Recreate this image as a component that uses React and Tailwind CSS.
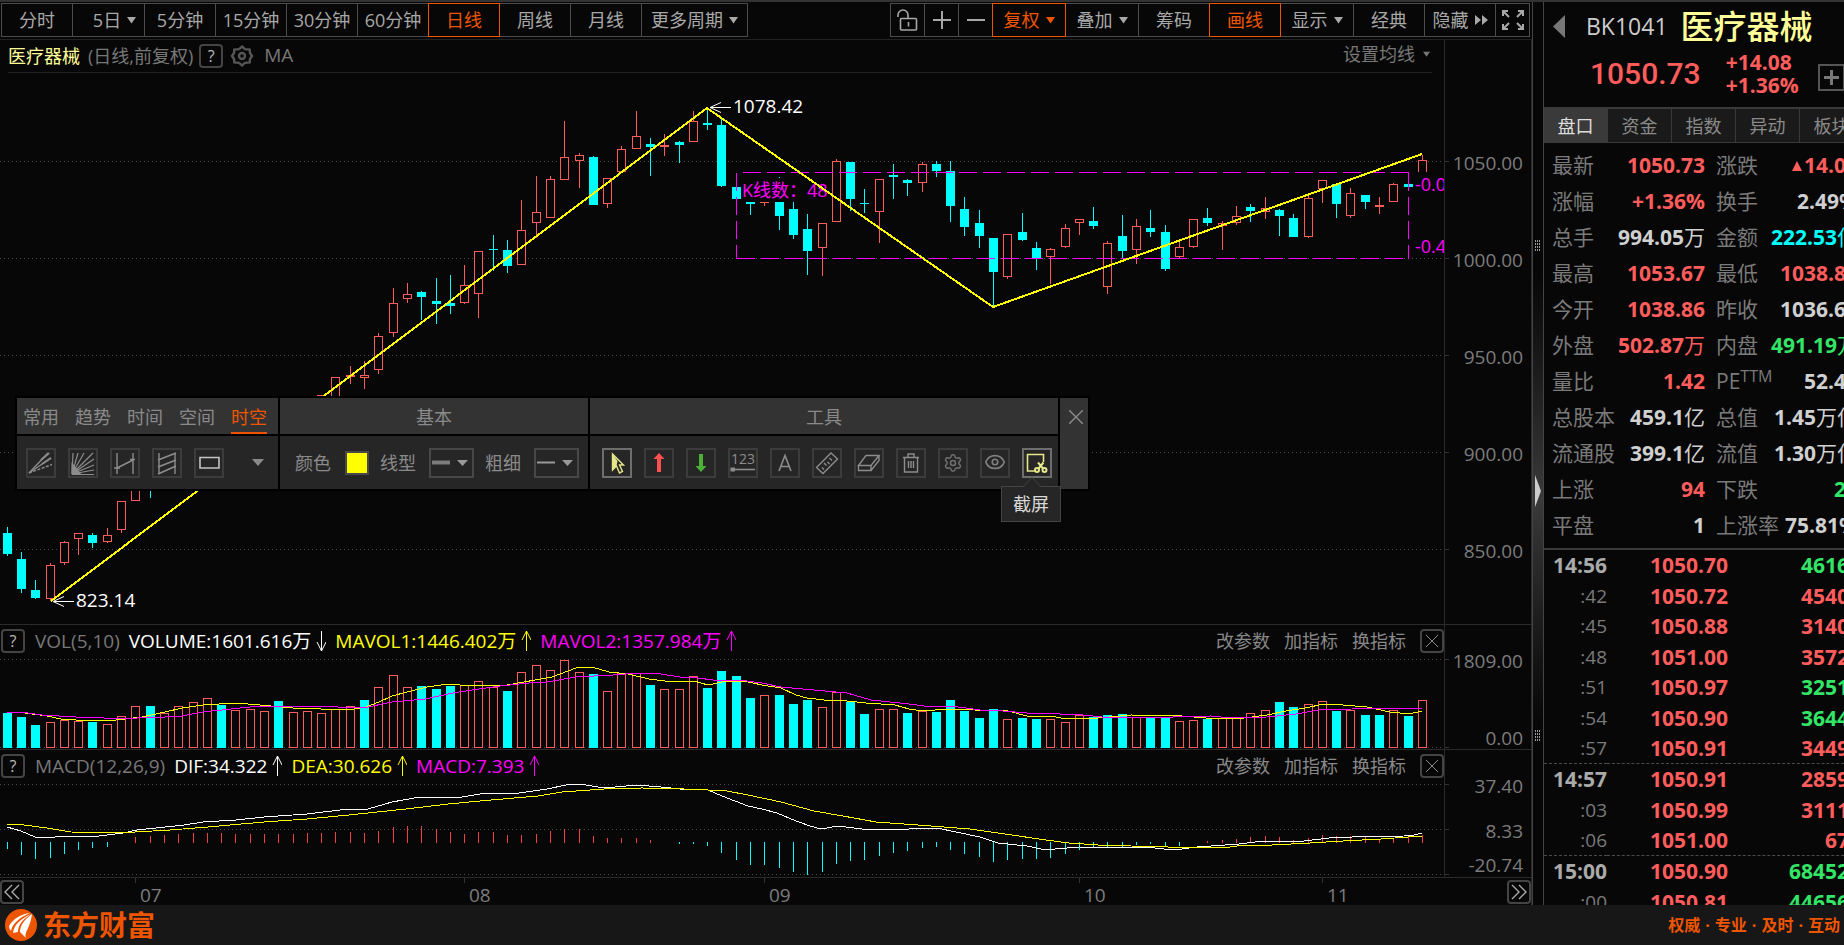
import React, { useState } from 'react'
import clsx from 'clsx'
import { Eye, Settings } from 'lucide-react'

const RED = '#ff5c5c'
const CYAN = '#00ffff'
const YELLOW = '#ffff00'
const MAGENTA = '#ff00ff'

// x of the centre pixel of bar i
const barX = (i) => Math.floor(7.2 + 14.295 * i)

// Daily bars: [up, high, bodyTop, bodyBottom, low]
const CANDLES = [
  [0, 527, 533, 554, 556], [0, 552, 559, 589, 593], [0, 580, 590, 598, 599], [1, 563, 565, 599, 601], [1, 541, 542, 563, 565],
  [1, 533, 533, 539, 555], [0, 533, 535, 543, 548], [1, 528, 535, 542, 543], [1, 501, 501, 530, 533], [1, 478, 484, 501, 501],
  [0, 470, 476, 486, 498], [1, 450, 455, 480, 484], [1, 440, 446, 470, 474], [1, 430, 440, 462, 470], [1, 428, 433, 452, 458],
  [0, 430, 436, 450, 455], [1, 422, 430, 448, 452], [1, 415, 424, 440, 446], [1, 410, 418, 436, 440], [0, 412, 420, 432, 438],
  [1, 404, 410, 430, 434], [1, 400, 404, 420, 426], [1, 395, 395, 415, 420], [1, 377, 377, 410, 414], [1, 366, 375, 377, 384],
  [1, 361, 375, 378, 389], [1, 333, 336, 370, 374], [1, 288, 303, 333, 337], [1, 283, 294, 299, 303], [0, 291, 292, 297, 320],
  [0, 278, 301, 304, 324], [0, 275, 303, 306, 314], [1, 265, 285, 303, 304], [1, 251, 251, 294, 318], [0, 235, 249, 250, 271],
  [0, 240, 250, 266, 273], [1, 200, 230, 265, 265], [1, 176, 212, 223, 238], [1, 176, 179, 218, 218], [1, 121, 157, 180, 180],
  [1, 153, 155, 161, 188], [0, 156, 157, 205, 205], [1, 178, 178, 204, 208], [1, 146, 149, 172, 172], [1, 111, 136, 149, 149],
  [0, 138, 144, 147, 176], [1, 134, 145, 147, 156], [0, 141, 142, 145, 163], [1, 111, 121, 142, 142], [0, 108, 123, 125, 130],
  [0, 119, 125, 186, 187], [0, 187, 187, 199, 199], [0, 194, 200, 204, 215], [1, 190, 195, 203, 206], [0, 177, 190, 216, 230],
  [0, 202, 209, 235, 239], [0, 214, 229, 251, 275], [1, 223, 223, 248, 276], [1, 159, 161, 222, 222], [0, 162, 162, 199, 211],
  [0, 189, 203, 204, 213], [1, 179, 179, 212, 243], [0, 164, 175, 177, 199], [0, 179, 180, 183, 196], [1, 162, 164, 183, 192],
  [0, 161, 164, 171, 177], [0, 161, 171, 206, 222], [0, 197, 209, 227, 236], [0, 210, 223, 236, 248], [0, 238, 238, 272, 307],
  [1, 234, 234, 277, 279], [0, 213, 232, 240, 241], [0, 242, 248, 258, 270], [1, 248, 249, 257, 284], [1, 224, 228, 247, 248],
  [1, 219, 219, 223, 235], [0, 207, 221, 226, 229], [1, 241, 243, 287, 294], [0, 215, 236, 251, 258], [1, 219, 226, 250, 264],
  [0, 210, 228, 232, 237], [0, 225, 232, 269, 271], [1, 242, 247, 257, 258], [1, 219, 219, 247, 248], [0, 208, 218, 223, 226],
  [1, 221, 223, 226, 250], [1, 206, 216, 223, 225], [0, 204, 207, 211, 222], [1, 197, 208, 212, 219], [0, 209, 210, 216, 236],
  [0, 214, 218, 237, 237], [1, 196, 198, 237, 238], [1, 180, 180, 189, 203], [0, 184, 184, 204, 218], [1, 188, 193, 216, 218],
  [0, 195, 195, 202, 209], [1, 197, 205, 207, 214], [1, 183, 184, 202, 202], [0, 184, 184, 187, 187], [1, 155, 160, 172, 172],
]

// Volume bar heights, negative on falling days
const VOLUMES = [
  -35, -31, -23, 26, 28, 27, -26, 24, 32, 42, -42, 35, 42, 46, 50, -43, 38, 39, 37, -47,
  36, 37, 35, 39, 42, -48, 61, 73, 61, -62, -59, -62, 63, 67, 61, -57, 76, 83, 78, 88,
  76, -74, 57, 75, 75, -63, 59, 59, 72, -60, -77, -72, -50, 53, -53, -44, -48, 41, 56, -46,
  -34, 39, 39, -35, 37, -36, -48, -37, -30, -39, 29, -30, -29, 29, 26, 33, -31, -33, -34, 31,
  -31, -31, 27, 28, -29, 30, 30, 35, 38, -46, -41, 44, 47, -37, 38, -33, -33, 38, -32, 48,
]

// MACD histogram, positive above the zero line
const HISTOGRAM = [
  -7, -13, -17, -16, -12, -8, -6, -5, 0, 6, 7, 8, 9, 10, 10, 10, 9, 9, 9, 9,
  9, 10, 10, 11, 11, 10, 12, 16, 17, 17, 14, 11, 9, 11, 11, 8, 8, 9, 12, 14,
  14, 7, 5, 5, 5, 3, 0, -2, -2, -4, -11, -18, -23, -23, -26, -30, -33, -30, -22, -19,
  -18, -14, -11, -9, -6, -5, -8, -12, -15, -20, -18, -17, -17, -16, -12, -8, -5, -6, -5, -3,
  -2, -5, -4, 0, 2, 3, 4, 6, 7, 6, 3, 5, 8, 7, 7, 6, 4, 5, 6, 8,
]

const MAVOL1 = '25,713 47,716 61,719 76,720 99,721 116,720 142,717 165,712 182,708 203,705 236,703 260,705 293,708 321,709 354,709 366,707 379,702 392,696 411,691 427,687 448,684 472,686 496,685 507,685 524,682 552,677 576,668 592,667 609,672 628,674 649,679 665,681 694,681 708,685 722,682 734,681 744,681 762,685 781,688 796,695 807,698 824,700 847,701 866,703 895,705 909,709 923,711 947,709 975,710 1008,711 1027,716 1050,716 1067,719 1098,718 1131,715 1182,716 1206,718 1244,718 1267,715 1286,711 1305,708 1324,704 1343,705 1367,707 1390,712 1409,714 1422,711'
const MAVOL2 = '7,712 28,713 42,715 76,717 104,718 137,718 165,717 182,716 203,712 231,709 250,707 293,706 326,706 349,708 368,707 392,702 425,699 453,693 472,690 500,686 529,683 547,682 576,677 613,675 637,673 661,674 680,677 698,678 713,680 739,680 762,683 781,687 814,690 847,693 871,700 909,704 932,707 951,706 980,710 1003,711 1027,713 1060,714 1083,715 1102,717 1131,717 1173,717 1211,716 1230,718 1267,717 1296,714 1319,710 1352,709 1376,708 1409,709 1422,708'
const DIF = '7,827 21,831 35,837 50,838 61,836 99,836 123,833 137,830 184,825 203,822 236,820 264,817 307,814 340,810 368,809 392,802 420,797 462,797 486,793 519,793 547,789 566,785 580,784 604,788 637,785 661,787 680,789 708,790 722,796 748,806 762,809 777,813 796,821 810,826 821,829 838,826 862,829 890,829 909,829 937,828 956,832 980,837 998,843 1027,846 1041,849 1055,849 1079,847 1121,848 1145,847 1164,849 1182,849 1197,847 1239,844 1263,841 1296,842 1329,838 1352,837 1404,836 1414,835 1422,833'
const DEA = '7,824 24,825 47,828 71,832 118,833 170,830 208,827 264,822 307,819 349,815 406,809 448,804 491,800 538,796 562,792 604,789 642,788 684,789 708,790 727,791 748,795 781,802 814,811 843,816 876,822 918,825 970,829 998,833 1046,840 1069,843 1098,845 1131,846 1168,847 1230,847 1244,845 1272,845 1310,843 1343,841 1381,839 1422,836'

const PRICE_LEVELS = [['1050.00', 161], ['1000.00', 258], ['950.00', 355], ['900.00', 452], ['850.00', 549]]
const MONTHS = [['07', 135], ['08', 464], ['09', 764], ['10', 1079], ['11', 1322]]

const QUOTES = [
  ['最新', '1050.73', '', 'r', '涨跌', '▲14.08', '', 'r'],
  ['涨幅', '+1.36%', '', 'r', '换手', '2.49%', '', 'w'],
  ['总手', '994.05', '万', 'w', '金额', '222.53', '亿', 'c'],
  ['最高', '1053.67', '', 'r', '最低', '1038.86', '', 'r'],
  ['今开', '1038.86', '', 'r', '昨收', '1036.65', '', 'w'],
  ['外盘', '502.87', '万', 'r', '内盘', '491.19', '万', 'g'],
  ['量比', '1.42', '', 'r', 'PE', '52.45', '', 'w'],
  ['总股本', '459.1', '亿', 'w', '总值', '1.45', '万亿', 'w'],
  ['流通股', '399.1', '亿', 'w', '流值', '1.30', '万亿', 'w'],
  ['上涨', '94', '', 'r', '下跌', '29', '', 'g'],
  ['平盘', '1', '', 'w', '上涨率', '75.81%', '', 'w'],
]

const TICKS = [
  ['14:56', '1050.70', '4616', 'g'],
  [':42', '1050.72', '4540', 'r'],
  [':45', '1050.88', '3140', 'r'],
  [':48', '1051.00', '3572', 'r'],
  [':51', '1050.97', '3251', 'g'],
  [':54', '1050.90', '3644', 'g'],
  [':57', '1050.91', '3449', 'r'],
  ['14:57', '1050.91', '2859', 'r'],
  [':03', '1050.99', '3111', 'r'],
  [':06', '1051.00', '67', 'r'],
  ['15:00', '1050.90', '68452', 'g'],
  [':00', '1050.81', '44656', 'g'],
]

const TONE = {
  r: 'text-[#ff5c5c]',
  g: 'text-[#33e566]',
  c: 'text-[#00ffff]',
  w: 'text-[#d0d0d0]',
}

function Caret({ className }) {
  return (
    <svg className={clsx('shrink-0', className)} width="9" height="7" viewBox="0 0 9 7" fill="currentColor">
      <path d="M0 0h9L4.5 6.5z" />
    </svg>
  )
}

function BarButton({ label, width, active, caret, children }) {
  return (
    <button
      aria-label={label}
      className={clsx(
        'relative -ml-px flex h-[34px] items-center justify-center gap-1.5 border whitespace-nowrap',
        width,
        active ? 'z-10 border-[#ee5500] text-[#ee5500]' : 'border-[#4c4c4c] text-[#a8a8a8]'
      )}
    >
      {children}
      {caret && <Caret />}
    </button>
  )
}

function Toolbar() {
  return (
    <div className="flex h-[38px] shrink-0 items-start justify-between border-b border-[#222] pt-px pr-0.5 pl-0.5 text-lg">
      <div className="flex">
        <BarButton width="w-[72px]">分时</BarButton>
        <BarButton width="w-[73px]" caret><span className="pl-3">5日</span></BarButton>
        <BarButton width="w-[72px]">5分钟</BarButton>
        <BarButton width="w-[72px]">15分钟</BarButton>
        <BarButton width="w-[72px]">30分钟</BarButton>
        <BarButton width="w-[72px]">60分钟</BarButton>
        <BarButton width="w-[72px]" active>日线</BarButton>
        <BarButton width="w-[72px]">周线</BarButton>
        <BarButton width="w-[72px]">月线</BarButton>
        <BarButton width="w-[107px]" caret>更多周期</BarButton>
      </div>
      <div className="flex">
        <BarButton width="w-[35px]" label="解锁">
          <svg width="24" height="24" viewBox="0 0 24 24" fill="none" stroke="currentColor" strokeWidth="1.6">
            <path d="M2 9V7a5 5 0 0 1 5-5 5 5 0 0 1 5 5v4" />
            <rect x="4.500" y="10.5" width="16" height="11.500" rx="1" />
            <path d="M12.500 14v4.500" />
          </svg>
        </BarButton>
        <BarButton width="w-[35px]" label="放大">
          <svg width="18" height="18" viewBox="0 0 18 18" stroke="currentColor" strokeWidth="2"><path d="M0 9h18M9 0v18" /></svg>
        </BarButton>
        <BarButton width="w-[35px]" label="缩小">
          <svg width="18" height="18" viewBox="0 0 18 18" stroke="currentColor" strokeWidth="2"><path d="M0 9h18" /></svg>
        </BarButton>
        <BarButton width="w-[74px]" active caret>复权</BarButton>
        <BarButton width="w-[74px]" caret>叠加</BarButton>
        <BarButton width="w-[72px]">筹码</BarButton>
        <BarButton width="w-[72px]" active>画线</BarButton>
        <BarButton width="w-[74px]" caret>显示</BarButton>
        <BarButton width="w-[72px]">经典</BarButton>
        <BarButton width="w-[72px]">
          隐藏
          <svg width="13" height="10" viewBox="0 0 13 10" fill="currentColor"><path d="M0 0l6 5-6 5zM7 0l6 5-6 5z" /></svg>
        </BarButton>
        <BarButton width="w-[35px]" label="全屏">
          <svg width="22" height="20" viewBox="0 0 22 20" fill="none" stroke="currentColor" strokeWidth="2">
            <path d="M1 6V1h5M1 1l6 6M16 1h5v5M21 1l-6 6M1 14v5h5M1 19l6-6M21 14v5h-5M21 19l-6-6" />
          </svg>
        </BarButton>
      </div>
    </div>
  )
}

function HelpButton() {
  return (
    <button aria-label="说明" className="flex size-6 items-center justify-center rounded-sm border-2 border-[#444] text-base leading-none text-[#bbb]">
      ?
    </button>
  )
}

function SubHeader() {
  return (
    <div className="ml-2 flex h-[33px] items-center justify-between border-b border-[#222] text-[#777]">
      <div className="flex items-center text-lg">
        <span className="text-[#ffff99]">医疗器械</span>
        <span className="ml-2">(日线,前复权)</span>
        <span className="ml-1.5"><HelpButton /></span>
        <button aria-label="均线设置" className="ml-[7px] text-[#555]">
          <svg width="24" height="24" viewBox="0 0 24 24" fill="none" stroke="currentColor" strokeWidth="2.4">
            <path d="M12 2.5l3 2.6 4.7.5.3 3.4L22 12l-2 3-.3 3.4-4.7.5-3 2.6-3-2.6-4.7-.5L4 15l-2-3 2-3 .3-3.4 4.7-.5z" />
            <circle cx="12" cy="12" r="3" />
          </svg>
        </button>
        <span className="ml-2.5 text-[19px]">MA</span>
      </div>
      <button className="mr-0.5 flex items-center gap-2 pb-1 text-lg">设置均线<Caret className="w-[7px]" /></button>
    </div>
  )
}

function Grid({ levels }) {
  return levels.map((y) => (
    <path key={y} d={`M0 ${y}.5H1444`} stroke="#4a4a4a" strokeDasharray="1 3" />
  ))
}

function Candle({ i, up, high, top, bottom, low }) {
  const x = barX(i)
  const color = up ? RED : CYAN
  return (
    <g>
      <rect x={x} y={high} width="1" height={low - high} fill={color} />
      <rect x={x - 4} y={top} width="9" height={Math.max(bottom - top, 1)} fill={color} />
      {up === 1 && bottom - top > 2 && (
        <rect x={x - 3} y={top + 1} width="7" height={bottom - top - (i === 99 ? 1 : 2)} fill="#070707" />
      )}
    </g>
  )
}

function PriceChart() {
  return (
    <svg className="h-full w-full" viewBox="0 73 1444 551" preserveAspectRatio="none" fontSize="19">
      <g shapeRendering="crispEdges">
        <Grid levels={PRICE_LEVELS.map((l) => l[1])} />
        {CANDLES.map(([up, high, top, bottom, low], i) => (
          <Candle key={i} i={i} up={up} high={high} top={top} bottom={bottom} low={low} />
        ))}
        <rect x="742" y="178" width="89" height="24" fill="#070707" />
        <g fill="none" stroke={MAGENTA} strokeDasharray="18 6">
          <path d="M1408.5 172.5H736.5" />
          <path d="M736.5 172.5V258.5" />
          <path d="M736.5 258.5H1408.5" />
          <path d="M1408.5 172.5V258.5" />
        </g>
      </g>
      <g fill={MAGENTA} fontSize="18">
        <text x="742" y="197">K线数：48</text>
        <text x="1415" y="191">-0.05</text>
        <text x="1415" y="253">-0.43</text>
      </g>
      <polyline points="51,601 707,108 993,307 1422,154" fill="none" stroke={YELLOW} strokeWidth="2" shapeRendering="crispEdges" />
      <g fill="none" stroke="#fff">
        <path d="M710 107.5h21M721 102.5l-11 5 11 5" />
        <path d="M53 601.5h21M64 596.5l-11 5 11 5" />
      </g>
      <g fill="#fff">
        <text x="733" y="113">1078.42</text>
        <text x="76" y="607">823.14</text>
      </g>
    </svg>
  )
}

function VolumeChart() {
  return (
    <svg className="block h-full w-full" viewBox="0 659 1444 90" preserveAspectRatio="none" shapeRendering="crispEdges">
      <Grid levels={[659, 747]} />
      {VOLUMES.map((v, i) => {
        const h = Math.abs(v)
        return v < 0
          ? <rect key={i} x={barX(i) - 4} y={748 - h} width="9" height={h} fill={CYAN} />
          : <rect key={i} x={barX(i) - 3.5} y={748.5 - h} width="8" height={h - 1} fill="#070707" stroke={RED} />
      })}
      <polyline points={MAVOL1} fill="none" stroke={YELLOW} />
      <polyline points={MAVOL2} fill="none" stroke={MAGENTA} />
    </svg>
  )
}

function MacdChart() {
  return (
    <svg className="block h-full w-full" viewBox="0 784 1444 93" preserveAspectRatio="none" shapeRendering="crispEdges">
      <Grid levels={[784, 829, 874]} />
      {HISTOGRAM.map((v, i) => (
        <rect
          key={i}
          x={barX(i)}
          y={v < 0 ? 842 : 843 - v}
          width="1"
          height={Math.abs(v)}
          fill={v < 0 ? CYAN : '#f04040'}
        />
      ))}
      <polyline points={DIF} fill="none" stroke="#fff" />
      <polyline points={DEA} fill="none" stroke={YELLOW} />
    </svg>
  )
}

// Scale on the right of a pane: labels are [text, centre y], ticks are y values
function Axis({ top, height, labels, ticks }) {
  return (
    <svg className="h-full w-[87px] shrink-0 border-l border-[#2a2a2a]" viewBox={`0 ${top} 86 ${height}`} preserveAspectRatio="none">
      {ticks.map((y) => <path key={y} d={`M0 ${y}.5h4`} stroke="#333" />)}
      {labels.map(([text, y]) => (
        <text key={text} x="78" y={y + 6} fontSize="19" textAnchor="end" fill="#7c7c7c">{text}</text>
      ))}
    </svg>
  )
}

function Arrow({ down }) {
  return (
    <svg className="mx-[5px]" width="10" height="22" viewBox="0 0 10 22" fill="none" stroke="currentColor">
      {down ? <path d="M5.5 1v20M1 12l4.5 9L10 12" /> : <path d="M5.5 21V1M1 10l4.5-9L10 10" />}
    </svg>
  )
}

function IndicatorHeader({ name, values }) {
  return (
    <div className="flex h-[34px] shrink-0 items-center justify-between pb-0.5 pl-px">
      <div className="flex items-center text-[19px] whitespace-nowrap">
        <HelpButton />
        <span className="mr-[9px] ml-2.5 text-[#777]">{name}</span>
        {values.map(([text, tone, down]) => (
          <span key={text} className={clsx('mr-1 flex items-center', tone)}>
            {text}
            <Arrow down={down} />
          </span>
        ))}
      </div>
      <div className="flex items-center gap-3.5 text-lg text-[#888]">
        <button>改参数</button>
        <button>加指标</button>
        <button>换指标</button>
        <button aria-label="关闭指标" className="flex size-6 items-center justify-center rounded-sm border-2 border-[#444]">
          <svg width="12" height="12" viewBox="0 0 12 12" stroke="currentColor"><path d="M0 0l12 12M12 0L0 12" /></svg>
        </button>
      </div>
    </div>
  )
}

function Pager({ label, flip }) {
  return (
    <button aria-label={label} className="flex size-6 items-center justify-center rounded-sm border-2 border-[#444] text-[#aaa]">
      <svg className={clsx(flip && 'rotate-180')} width="16" height="16" viewBox="0 0 16 16" fill="none" stroke="currentColor" strokeWidth="1.4">
        <path d="M1 1l7 7-7 7M8 1l7 7-7 7" />
      </svg>
    </button>
  )
}

function TimeAxis() {
  return (
    <div className="flex h-[27px] shrink-0 items-center border-r border-[#2a2a2a]">
      <Pager label="更早" flip />
      <svg className="h-full min-w-0 flex-1" viewBox="24 878 1420 27" preserveAspectRatio="none">
        {MONTHS.map(([text, x]) => (
          <g key={text}>
            <path d={`M${x}.5 878v5`} stroke="#333" />
            <text x={x + 5} y="902" fontSize="19" fill="#7c7c7c">{text}</text>
          </g>
        ))}
      </svg>
      <div className="flex w-[87px] justify-end"><Pager label="更晚" /></div>
    </div>
  )
}

function ToolIcon({ label, active, children }) {
  return (
    <button
      aria-label={label}
      className={clsx(
        'flex size-[30px] items-center justify-center border-2 text-[#8c8c8c]',
        active ? 'border-[#6e6e6e]' : 'border-[#3c3c3c]'
      )}
    >
      <svg width="26" height="26" viewBox="0 0 26 26" fill="none" stroke="currentColor" strokeWidth="1.4">{children}</svg>
    </button>
  )
}

function LineSelect({ id, label, options, thick }) {
  return (
    <>
      <label htmlFor={id}>{label}</label>
      <div className="relative ml-0.5 h-[30px] w-[45px] border-2 border-[#484848] text-[#999]">
        <select id={id} className="size-full appearance-none bg-transparent text-transparent outline-none">
          {options.map((o) => <option key={o}>{o}</option>)}
        </select>
        <svg className="pointer-events-none absolute inset-0" width="41" height="26" viewBox="0 0 41 26">
          <path d="M1 12.5h18" stroke="currentColor" strokeWidth={thick ? 4 : 2} opacity={thick ? 0.75 : 1} />
          <path d="M26 10h11l-5.5 6z" fill="currentColor" />
        </svg>
      </div>
    </>
  )
}

function DrawPanel() {
  const tabs = ['常用', '趋势', '时间', '空间', '时空']
  const [tab, setTab] = useState('时空')
  const head = 'h-9 bg-[#333]'
  const body = 'flex h-[53px] items-center bg-[#262626]'

  return (
    <div className="absolute top-[394px] left-[15px] z-20 flex gap-0.5 border-2 border-black bg-black text-lg text-[#8a8a8a]">
      <div className="flex w-[261px] flex-col gap-0.5">
        <div className={clsx(head, 'flex items-stretch gap-4 px-1.5')}>
          {tabs.map((t) => (
            <button
              key={t}
              onClick={() => setTab(t)}
              className={clsx('border-b-2 pt-1 whitespace-nowrap', t === tab ? 'border-[#ee5500] text-[#ee5500]' : 'border-transparent')}
            >
              {t}
            </button>
          ))}
        </div>
        <div className={clsx(body, 'gap-3 pl-[9px]')}>
          <ToolIcon label="速阻线">
            <path d="M1 23L20 3" />
            <path d="M1 23L23 8" />
            <path d="M1 23L24 14.5" strokeDasharray="3 1.5" />
            <path d="M13 10l8-7M14 14l9-6" strokeWidth="2" />
          </ToolIcon>
          <ToolIcon label="甘氏线">
            <path d="M2 24L3 3M2 24L8 3M2 24L14 3M2 24L23 3M2 24L24 9M2 24l22-9M2 24l22-4M2 24.5h22" strokeWidth="1.2" />
            <path d="M1.500 12v12.500h10z" fill="currentColor" stroke="none" />
          </ToolIcon>
          <ToolIcon label="周期线">
            <path d="M5 3v21M21 3v21M5 18l16-8" />
            <path d="M2 18h6M18 9.500h5" />
          </ToolIcon>
          <ToolIcon label="平行线">
            <path d="M5 3v21M21 3v21" />
            <path d="M4 10L22 3M4 17l18-7M4 24l18-8" strokeWidth="1.8" />
          </ToolIcon>
          <ToolIcon label="矩形">
            <path d="M4 7.500h19v10.500H4z" stroke="#c4c4c4" strokeWidth="1.6" />
          </ToolIcon>
          <button aria-label="更多画线" className="ml-4">
            <svg width="12" height="7" viewBox="0 0 12 7" fill="currentColor"><path d="M0 0h12L6 7z" /></svg>
          </button>
        </div>
      </div>

      <div className="flex w-[308px] flex-col gap-0.5">
        <div className={clsx(head, 'flex items-center justify-center pt-0.5')}>基本</div>
        <div className={clsx(body, 'gap-[11px] pl-[15px] whitespace-nowrap')}>
          <label htmlFor="line-color">颜色</label>
          <input
            id="line-color"
            type="color"
            defaultValue="#ffff00"
            className="ml-[3px] size-6 appearance-none border-2 border-[#484848] bg-[#ffff00] p-0 [&::-webkit-color-swatch]:rounded-none [&::-webkit-color-swatch]:border-0 [&::-webkit-color-swatch-wrapper]:p-0"
          />
          <LineSelect id="line-style" label="线型" options={['实线', '虚线']} thick />
          <LineSelect id="line-width" label="粗细" options={['细', '粗']} />
        </div>
      </div>

      <div className="flex w-[468px] flex-col gap-0.5">
        <div className={clsx(head, 'flex items-center justify-center pt-0.5')}>工具</div>
        <div className={clsx(body, 'gap-3 pl-3')}>
          <ToolIcon label="选择" active>
            <path d="M8.500 4v16l4-4 3 7 3-1.500-3-6.500h4z" stroke="#e6e68a" fill="#262626" />
            <path d="M8.500 4v16l4-4 1-5z" fill="#e6e68a" stroke="none" />
          </ToolIcon>
          <ToolIcon label="向上箭头">
            <path d="M13 3l5.500 6H15v13h-4V9H7.500z" fill="#ff5050" stroke="none" />
          </ToolIcon>
          <ToolIcon label="向下箭头">
            <path d="M13 22l5.500-6H15V4h-4v12H7.500z" fill="#4caf38" stroke="none" />
          </ToolIcon>
          <ToolIcon label="数字标注">
            <text x="13" y="14" fontSize="14" textAnchor="middle" fill="currentColor" stroke="none">123</text>
            <path d="M3 19.500h22" strokeWidth="1.6" />
            <path d="M0.500 17.500h4.500v4H0.500z" fill="currentColor" stroke="none" />
          </ToolIcon>
          <ToolIcon label="文字">
            <path d="M7 21l6-15.500L19 21M9 16.500h8" strokeWidth="1.600" />
          </ToolIcon>
          <ToolIcon label="测量">
            <path d="M2.500 17.500L17 3l6.500 6L9 23.500z" />
            <path d="M8 17.500l2 2M10 13l2.500 2.500M13.500 12l2 2M15.500 8l2.500 2.500" />
          </ToolIcon>
          <ToolIcon label="橡皮">
            <path d="M2.500 15.500L10 5.500h13l-8 10zM2.500 15.500v5h12.500v-5M15 20.500l8-10v-5" />
          </ToolIcon>
          <ToolIcon label="删除">
            <path d="M5 7.500h16M10 7V4h6v3M6.500 7.500V22h13V7.500M10.500 11v7M13 11v7M15.500 11v7" />
          </ToolIcon>
          <ToolIcon label="设置">
            <Settings x="3" y="3" width="20" height="20" strokeWidth={1.8} color="#707070" />
          </ToolIcon>
          <ToolIcon label="显示隐藏">
            <Eye x="2" y="1" width="22" height="22" strokeWidth={1.8} color="#808080" />
          </ToolIcon>
          <ToolIcon label="截屏" active>
            <g stroke="#e6e68a">
              <path d="M11 21H3.500V4.500h16V12" strokeWidth="1.600" />
              <circle cx="13" cy="20" r="2" strokeWidth="2" />
              <circle cx="20.500" cy="20" r="2" strokeWidth="2" />
              <path d="M14 12.500l5 6M19.500 12.500l-5 6" strokeWidth="2" />
            </g>
          </ToolIcon>
        </div>
      </div>

      <div className="flex w-7 justify-end bg-[#333] pt-3 pr-[5px]">
        <button aria-label="关闭" className="size-3.5">
          <svg width="14" height="14" viewBox="0 0 14 14" stroke="currentColor" strokeWidth="1.4"><path d="M0 0l14 14M14 0L0 14" /></svg>
        </button>
      </div>

      <div role="tooltip" className="absolute top-[88px] right-[27px] flex h-9 w-[60px] items-center justify-center border border-[#444] bg-[#262626] text-[#d8d8d8]">
        <svg className="absolute -top-2.5 left-5" width="20" height="11" viewBox="0 0 20 11" fill="#262626" stroke="#444">
          <path d="M0 10.500L10 .5l10 10" />
        </svg>
        截屏
      </div>
    </div>
  )
}

function ChartArea() {
  return (
    <section className="relative flex min-w-0 flex-1 flex-col">
      <Toolbar />
      <div className="flex min-h-0 flex-1 border-r border-b border-[#2a2a2a]">
        <div className="flex min-w-0 flex-1 flex-col">
          <div className="mr-3"><SubHeader /></div>
          <div className="min-h-0 flex-1"><PriceChart /></div>
        </div>
        <Axis top={40} height={584} labels={PRICE_LEVELS.map(([t, y]) => [t, y + 3])} ticks={PRICE_LEVELS.map((l) => l[1])} />
      </div>
      <div className="flex h-[125px] shrink-0 border-r border-b border-[#2a2a2a]">
        <div className="flex min-w-0 flex-1 flex-col">
          <IndicatorHeader
            name="VOL(5,10)"
            values={[
              ['VOLUME:1601.616万', 'text-white', true],
              ['MAVOL1:1446.402万', 'text-[#ffff00]'],
              ['MAVOL2:1357.984万', 'text-[#ff00ff]'],
            ]}
          />
          <div className="min-h-0 flex-1"><VolumeChart /></div>
        </div>
        <Axis top={625} height={124} labels={[['1809.00', 662], ['0.00', 739]]} ticks={[659, 747]} />
      </div>
      <div className="flex h-[128px] shrink-0 border-r border-b border-[#2a2a2a]">
        <div className="flex min-w-0 flex-1 flex-col">
          <IndicatorHeader
            name="MACD(12,26,9)"
            values={[
              ['DIF:34.322', 'text-white'],
              ['DEA:30.626', 'text-[#ffff00]'],
              ['MACD:7.393', 'text-[#ff00ff]'],
            ]}
          />
          <div className="min-h-0 flex-1"><MacdChart /></div>
        </div>
        <Axis top={750} height={127} labels={[['37.40', 787], ['8.33', 832], ['-20.74', 866]]} ticks={[784, 829, 874]} />
      </div>
      <TimeAxis />
      <DrawPanel />
    </section>
  )
}

function Grip() {
  return (
    <svg width="6" height="12" viewBox="0 0 6 12" fill="#999">
      {[0, 3, 6, 9].map((y) => [0, 2, 4].map((x) => <rect key={`${x}-${y}`} x={x} y={y} width="1" height="2" />))}
    </svg>
  )
}

function Splitter() {
  return (
    <div className="flex w-3 shrink-0 flex-col items-center justify-between border-x border-[#444] bg-linear-to-b from-[#070707] from-30% via-[#3a3a3a] via-55% to-[#070707] to-80% pt-[238px] pb-[163px]">
      <Grip />
      <svg width="6" height="32" viewBox="0 0 6 32" fill="#ccc"><path d="M0 0l6 16-6 16z" /></svg>
      <Grip />
    </div>
  )
}

function Value({ text, unit, tone }) {
  return (
    <dd className={clsx('text-right font-bold whitespace-nowrap', TONE[tone])}>
      {text.startsWith('▲')
        ? <><svg className="mr-0.5 mb-0.5 inline-block align-baseline" width="10" height="10" viewBox="0 0 10 10" fill="currentColor"><path d="M5 0l5 10H0z" /></svg>{text.slice(1)}</>
        : text}
      <span className="font-normal">{unit}</span>
    </dd>
  )
}

function QuotePanel() {
  const tabs = ['盘口', '资金', '指数', '异动', '板块']
  return (
    <aside className="flex w-[300px] shrink-0 flex-col overflow-hidden">
      <header className="h-[105px] shrink-0">
        <div className="flex h-12 items-center whitespace-nowrap">
          <button aria-label="上一只" className="ml-[9px]">
            <svg width="12" height="23" viewBox="0 0 12 23" fill="#777"><path d="M12 0v23L0 11.500z" /></svg>
          </button>
          <span className="ml-[21px] text-[23px] text-[#ccc]">BK1041</span>
          <h1 className="ml-[13px] text-[33px] leading-none font-medium text-[#ffff99]">医疗器械</h1>
        </div>
        <div className="flex items-center text-[#ff5c5c]">
          <span className="ml-[46px] font-[Roboto] text-[30px] leading-10 font-medium">1050.73</span>
          <span className="ml-[25px] flex flex-col pt-px text-[21px] leading-[23px] font-bold">
            <span>+14.08</span>
            <span>+1.36%</span>
          </span>
          <button aria-label="加自选" className="mt-2 ml-[19px] flex size-[27px] shrink-0 items-center justify-center border-2 border-[#555]">
            <svg width="15" height="15" viewBox="0 0 15 15" stroke="#777" strokeWidth="3"><path d="M0 7.500h15M7.500 0v15" /></svg>
          </button>
        </div>
      </header>

      <nav className="flex h-9 shrink-0 border-t-2 border-b border-[#3a3a3a] text-lg">
        {tabs.map((t, i) => (
          <button
            key={t}
            className={clsx(
              'w-16 shrink-0 border-r border-[#3a3a3a]',
              i === 0 ? 'bg-[#3a3a3a] text-[#ddd]' : 'bg-[#1a1a1a] text-[#8a8a8a]'
            )}
          >
            {t}
          </button>
        ))}
      </nav>

      <dl className="w-[314px] shrink-0 pt-1 pl-2 text-[21px] leading-9">
        {QUOTES.map(([a, av, au, at, b, bv, bu, bt]) => (
          <div key={a} className="grid grid-cols-[64px_89px_11px_50px_92px]">
            <dt className="whitespace-nowrap text-[#7a7a7a]">{a}</dt>
            <Value text={av} unit={au} tone={at} />
            <span />
            <dt className="whitespace-nowrap text-[#7a7a7a]">
              {b}
              {b === 'PE' && <sup className="top-[-7px] text-base">TTM</sup>}
            </dt>
            <Value text={bv} unit={bu} tone={bt} />
          </div>
        ))}
      </dl>

      <div className="mt-[5px] min-h-0 flex-1 overflow-hidden border-t-2 border-[#3a3a3a]">
        <table className="w-[305px] table-fixed border-collapse text-right text-[21px] leading-[30px] font-bold">
          <tbody>
            {TICKS.map(([time, price, vol, tone], i) => (
              <tr key={i} className={clsx('odd:h-[30px] even:h-[31px]', time.length > 3 && i > 0 && 'border-t border-dashed border-[#4a4a4a]')}>
                <td className={clsx('w-[63px] p-0', time.length > 3 ? 'text-[#aaa]' : 'text-[19px] font-normal text-[#7a7a7a]')}>{time}</td>
                <td className="w-[121px] p-0 text-[#ff5c5c]">{price}</td>
                <td className={clsx('p-0', TONE[tone])}>{vol}</td>
              </tr>
            ))}
          </tbody>
        </table>
      </div>
    </aside>
  )
}

function Footer() {
  return (
    <footer className="flex h-10 shrink-0 items-center justify-between bg-[#171717] pr-1 pl-[5px] text-[#ee5500]">
      <a href="#" className="flex items-center gap-1.5">
        <svg width="32" height="32" viewBox="0 0 32 32">
          <circle cx="16" cy="16" r="16" fill="#ee5500" />
          <g fill="#fff">
            <path d="M25 4C16 5 8 10 4 17c0 2 1 4 2 5 1-7 9-14 19-18z" />
            <path d="M26 5C17 9 9 15 8 24l5-1c0-7 5-13 13-18z" />
            <path d="M27 5c-7 5-12 11-12 18l6 6c-2-6 4-9 6-24z" />
          </g>
        </svg>
        <span className="text-[28px] leading-none font-bold">东方财富</span>
      </a>
      <div className="flex gap-[5px] text-base font-bold">
        <span>权威</span>
        <span>·</span>
        <span>专业</span>
        <span>·</span>
        <span>及时</span>
        <span>·</span>
        <span>互动</span>
      </div>
    </footer>
  )
}

export default function App() {
  return (
    <div className="flex h-screen min-h-[700px] flex-col overflow-hidden border-t-2 border-[#333] bg-[#070707] font-['Open_Sans','Noto_Sans_CJK_SC',sans-serif] text-[#aaa]">
      <main className="flex min-h-0 flex-1">
        <ChartArea />
        <Splitter />
        <QuotePanel />
      </main>
      <Footer />
    </div>
  )
}
